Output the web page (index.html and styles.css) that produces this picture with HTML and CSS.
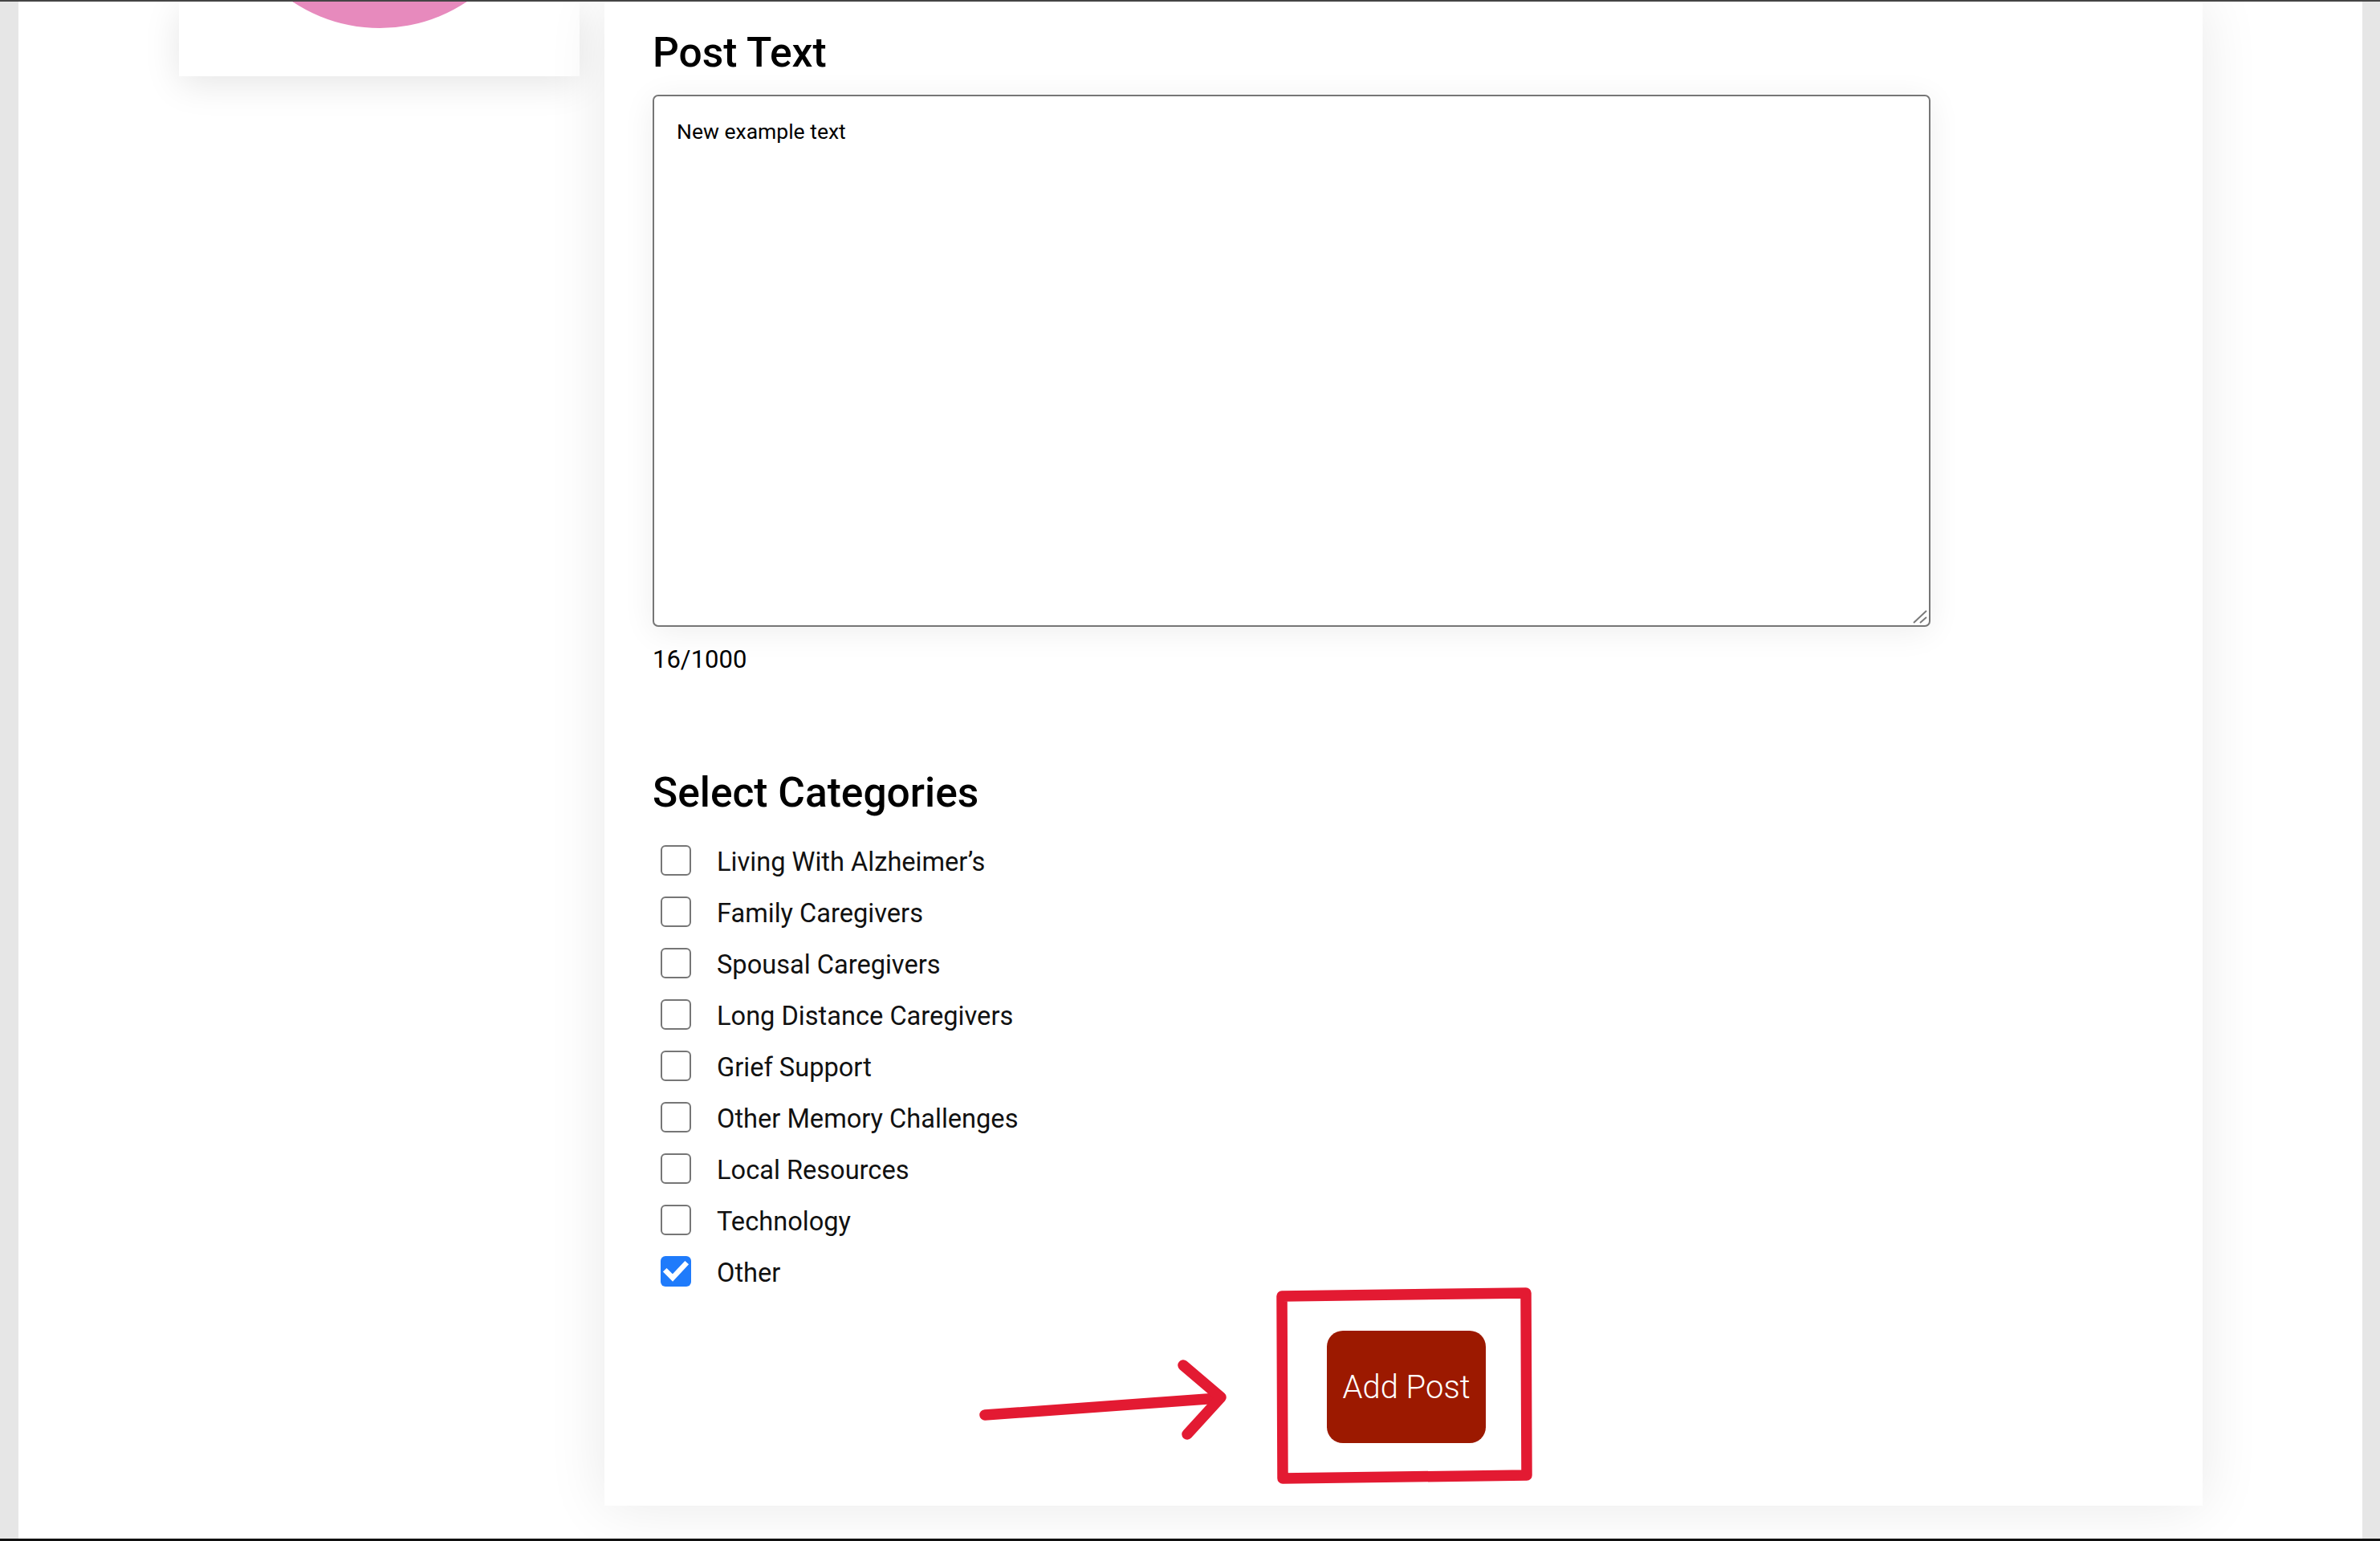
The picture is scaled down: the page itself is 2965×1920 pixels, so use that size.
FILE: index.html
```html
<!DOCTYPE html>
<html lang="en">
<head>
<meta charset="utf-8">
<title>Add Post</title>
<link rel="stylesheet" href="styles.css">
</head>
<body>
<div class="window">
  <div class="topbar"></div>
  <div class="frame">
    <div class="edge"></div>
    <div class="viewport">
      <div class="container">
        <aside class="sidebar">
          <div class="profile-card">
            <div class="avatar"></div>
          </div>
        </aside>
        <main class="post-card">
          <h2 class="section-title">Post Text</h2>
          <div class="textarea-wrap">
            <textarea class="post-text" maxlength="1000">New example text</textarea>
            <svg class="resize-grip" width="20" height="20" viewBox="0 0 20 20" aria-hidden="true">
              <line x1="1" y1="17" x2="17" y2="2" />
              <line x1="9" y1="17" x2="17" y2="10" />
            </svg>
          </div>
          <div class="counter">16/1000</div>

          <h2 class="section-title categories-title">Select Categories</h2>
          <div class="categories">
            <label class="cat"><span class="box"></span><span class="cat-label">Living With Alzheimer’s</span></label>
            <label class="cat"><span class="box"></span><span class="cat-label">Family Caregivers</span></label>
            <label class="cat"><span class="box"></span><span class="cat-label">Spousal Caregivers</span></label>
            <label class="cat"><span class="box"></span><span class="cat-label">Long Distance Caregivers</span></label>
            <label class="cat"><span class="box"></span><span class="cat-label">Grief Support</span></label>
            <label class="cat"><span class="box"></span><span class="cat-label">Other Memory Challenges</span></label>
            <label class="cat"><span class="box"></span><span class="cat-label">Local Resources</span></label>
            <label class="cat"><span class="box"></span><span class="cat-label">Technology</span></label>
            <label class="cat"><span class="box checked"><svg width="38" height="38" viewBox="0 0 38 38" aria-hidden="true"><polyline points="7.5,19.5 15,27 30.5,10.5" /></svg></span><span class="cat-label">Other</span></label>
          </div>

          <div class="actions">
            <button class="add-post" type="button">Add Post</button>
          </div>
        </main>
      </div>
    </div>
    <div class="edge edge-right"></div>
  </div>
  <div class="bottombar"></div>

  <svg class="annotation" width="2965" height="1920" viewBox="0 0 2965 1920" aria-hidden="true">
    <path class="mark" d="M1597,1615 L1901,1611 L1902,1838 L1598,1842 Z" />
    <path class="mark" d="M1227,1763 L1518,1742" />
    <path class="mark" d="M1474,1701 L1521,1741 L1479,1787" />
  </svg>
</div>
</body>
</html>
```

FILE: styles.css
```css
* { box-sizing: border-box; }

html, body {
  margin: 0;
  padding: 0;
  background: #ffffff;
}

body {
  font-family: Roboto, "Liberation Sans", Arial, sans-serif;
  color: #000;
}

.window {
  position: relative;
  width: 2965px;
  height: 1920px;
  display: flex;
  flex-direction: column;
  overflow: hidden;
}

.topbar {
  height: 2px;
  background: #454545;
  flex: none;
}

.bottombar {
  height: 3px;
  background: #111111;
  flex: none;
}

.frame {
  flex: 1;
  display: flex;
  min-height: 0;
}

.edge {
  width: 23px;
  background: #e6e6e6;
  flex: none;
}

.edge-right {
  width: 22px;
}

.viewport {
  flex: 1;
  background: #ffffff;
  overflow: hidden;
  position: relative;
}

.container {
  width: 2521px;
  margin: 0 auto;
  display: flex;
  align-items: flex-start;
  gap: 31px;
  padding-left: 0.5px;
}

.sidebar {
  width: 499px;
  flex: none;
}

.profile-card {
  background: #fff;
  padding-bottom: 60px;
  box-shadow: 0 10px 45px rgba(0, 0, 0, 0.10);
  overflow: hidden;
}

.avatar {
  width: 390px;
  height: 390px;
  margin: -357px auto 0;
  border-radius: 50%;
  background: #e78abd;
}

.post-card {
  width: 1991px;
  flex: none;
  background: #fff;
  padding: 33px 60px 78px;
  box-shadow: 0 0 70px rgba(0, 0, 0, 0.09);
}

.section-title {
  margin: 0;
  font-size: 51.5px;
  line-height: 62px;
  font-weight: 500;
  color: #000;
}

.textarea-wrap {
  position: relative;
  width: 1592px;
  margin-top: 21px;
}

.post-text {
  display: block;
  width: 1592px;
  height: 663px;
  border: 2px solid #767676;
  border-radius: 7px;
  padding: 28px 28px;
  font-family: Roboto, "Liberation Sans", Arial, sans-serif;
  font-size: 26.5px;
  line-height: 32px;
  color: #000;
  background: #fff;
  resize: none;
  outline: none;
  box-shadow: 0 6px 40px rgba(0, 0, 0, 0.07);
}

.resize-grip {
  position: absolute;
  right: 2px;
  bottom: 2px;
}

.resize-grip line {
  stroke: #7a7a7a;
  stroke-width: 2;
}

.counter {
  margin-top: 22px;
  font-size: 31px;
  line-height: 38px;
  color: #000;
}

.categories-title {
  margin-top: 116px;
}

.categories {
  margin-top: 21px;
  display: flex;
  flex-direction: column;
}

.cat {
  height: 64px;
  display: flex;
  align-items: center;
  gap: 32px;
  padding-left: 10px;
}

.box {
  width: 38px;
  height: 38px;
  flex: none;
  border: 2px solid #767676;
  border-radius: 6px;
  background: #fff;
  display: flex;
  align-items: center;
  justify-content: center;
}

.box.checked {
  border: none;
  background: #1f7bfb;
}

.box.checked polyline {
  fill: none;
  stroke: #fff;
  stroke-width: 6.5;
  stroke-linecap: square;
  stroke-linejoin: miter;
}

.cat-label {
  font-size: 32.6px;
  line-height: 40px;
  padding-top: 3px;
  color: #111;
}

.actions {
  margin-top: 42px;
  display: flex;
  justify-content: center;
  padding-left: 7px;
}

.add-post {
  height: 140px;
  padding: 0 19px;
  border: none;
  border-radius: 20px;
  background: #9c1900;
  color: #fff;
  font-family: Roboto, "Liberation Sans", Arial, sans-serif;
  font-size: 40px;
  font-weight: 300;
  cursor: pointer;
}

.annotation {
  position: absolute;
  top: 0;
  left: 0;
  pointer-events: none;
}

.annotation .mark {
  fill: none;
  stroke: #e31a32;
  stroke-width: 13.5;
  stroke-linecap: round;
  stroke-linejoin: round;
}
```
